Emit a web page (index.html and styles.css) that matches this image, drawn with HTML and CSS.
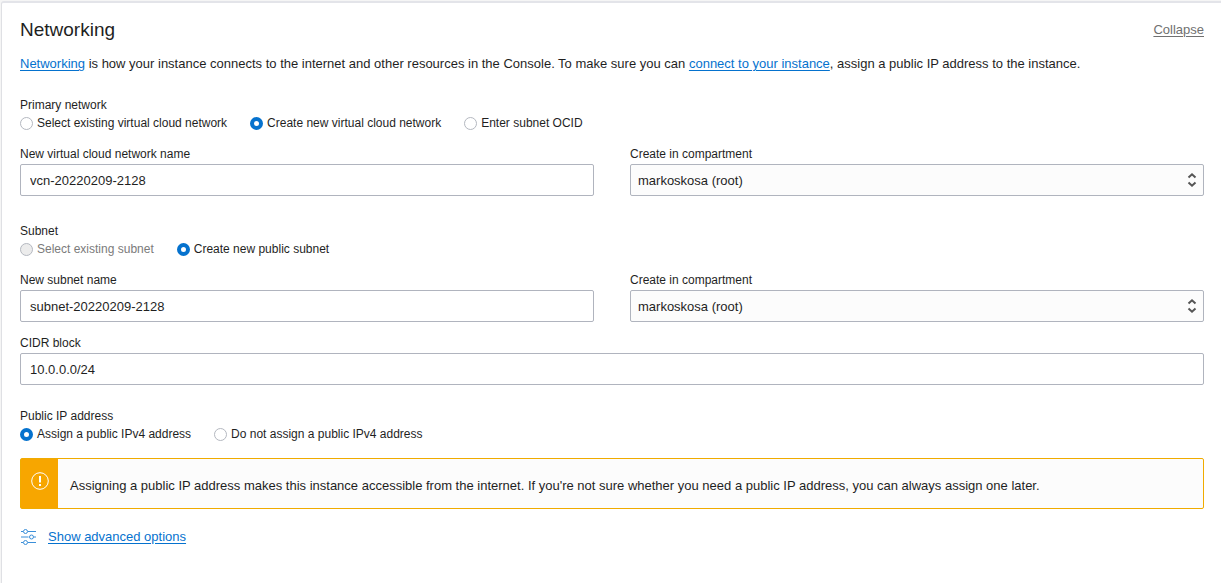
FILE: index.html
```html
<!DOCTYPE html>
<html lang="en">
<head>
<meta charset="utf-8">
<title>Networking</title>
<link rel="stylesheet" href="styles.css">
</head>
<body>
<main class="panel">
  <header class="panel-header">
    <h1 class="title">Networking</h1>
    <a class="collapse" href="#">Collapse</a>
  </header>
  <p class="intro"><a href="#">Networking</a> is how your instance connects to the internet and other resources in the Console. To make sure you can <a href="#">connect to your instance</a>, assign a public IP address to the instance.</p>
  <form>
    <fieldset class="group">
      <legend>Primary network</legend>
      <div class="radios">
        <label class="radio"><input type="radio" name="vcn">Select existing virtual cloud network</label>
        <label class="radio"><input type="radio" name="vcn" checked>Create new virtual cloud network</label>
        <label class="radio"><input type="radio" name="vcn">Enter subnet OCID</label>
      </div>
    </fieldset>
    <div class="fields">
      <div class="field">
        <label for="vcn-name">New virtual cloud network name</label>
        <input class="control" id="vcn-name" type="text" value="vcn-20220209-2128">
      </div>
      <div class="field">
        <label for="vcn-compartment">Create in compartment</label>
        <div class="select">
          <select class="control" id="vcn-compartment"><option>markoskosa (root)</option></select>
          <svg class="arrows" viewBox="0 0 10 16" aria-hidden="true"><path d="M1.500 5.500 5 2.300l3.500 3.200M1.500 10.500 5 13.700l3.500-3.200"/></svg>
        </div>
      </div>
    </div>
    <fieldset class="group">
      <legend>Subnet</legend>
      <div class="radios">
        <label class="radio disabled"><input type="radio" name="subnet" disabled>Select existing subnet</label>
        <label class="radio"><input type="radio" name="subnet" checked>Create new public subnet</label>
      </div>
    </fieldset>
    <div class="fields">
      <div class="field">
        <label for="subnet-name">New subnet name</label>
        <input class="control" id="subnet-name" type="text" value="subnet-20220209-2128">
      </div>
      <div class="field">
        <label for="subnet-compartment">Create in compartment</label>
        <div class="select">
          <select class="control" id="subnet-compartment"><option>markoskosa (root)</option></select>
          <svg class="arrows" viewBox="0 0 10 16" aria-hidden="true"><path d="M1.500 5.500 5 2.300l3.500 3.200M1.500 10.500 5 13.700l3.500-3.200"/></svg>
        </div>
      </div>
      <div class="field wide">
        <label for="cidr">CIDR block</label>
        <input class="control" id="cidr" type="text" value="10.0.0.0/24">
      </div>
    </div>
    <fieldset class="group">
      <legend>Public IP address</legend>
      <div class="radios">
        <label class="radio"><input type="radio" name="ip" checked>Assign a public IPv4 address</label>
        <label class="radio"><input type="radio" name="ip">Do not assign a public IPv4 address</label>
      </div>
    </fieldset>
  </form>
  <div class="alert" role="note">
    <div class="alert-mark">
      <svg class="alert-icon" viewBox="0 0 18 18" aria-hidden="true"><circle cx="9" cy="9" r="8.300"/><path d="M9 4v6.500M9 12v2"/></svg>
    </div>
    <p class="alert-text">Assigning a public IP address makes this instance accessible from the internet. If you're not sure whether you need a public IP address, you can always assign one later.</p>
  </div>
  <div class="advanced">
    <svg class="sliders" viewBox="0 0 16 16" aria-hidden="true"><path d="M1 2.500h2M8 2.500h8M1 8h7.500M14 8h2M1 13.500h2M8 13.500h8"/><circle cx="5.500" cy="2.500" r="2"/><circle cx="11.500" cy="8" r="2"/><circle cx="5.500" cy="13.500" r="2"/></svg>
    <a href="#">Show advanced options</a>
  </div>
</main>
</body>
</html>
```
FILE: styles.css
```css
* {
  box-sizing: border-box;
}

body {
  margin: 0;
  padding: 1px 0 0 1px;
  background: #f5f5f5;
  color: #1f1f1f;
  font-family: "Liberation Sans", Arial, sans-serif;
  font-size: 12px;
  line-height: 18px;
}

a {
  color: #0572ce;
  text-underline-offset: 2px;
}

.panel {
  min-height: calc(100vh - 1px);
  padding: 15px 17px 35px 18px;
  border-top: 2px solid #e3e4e9;
  border-left: 1px solid #dfe0e4;
  border-top-left-radius: 3px;
  background: #fff;
}

.panel-header {
  display: flex;
  align-items: center;
  justify-content: space-between;
}

.title {
  margin: 0;
  font-size: 19px;
  font-weight: 400;
  line-height: 24px;
}

.collapse {
  color: #707070;
  font-size: 13px;
}

.intro {
  margin: 12px 0 22px;
  font-size: 13px;
  line-height: 20px;
}

.group {
  min-width: 0;
  margin: 0;
  padding: 0;
  border: 0;
}

.group legend {
  padding: 0;
}

.radios {
  display: flex;
  flex-wrap: wrap;
  column-gap: 23px;
}

.radio {
  display: flex;
  align-items: center;
  gap: 4px;
}

.radio input {
  appearance: none;
  width: 13px;
  height: 13px;
  margin: 0;
  border: 1px solid #b4b8c0;
  border-radius: 50%;
  background: #fff;
}

.radio input:checked {
  border: 4px solid #0572ce;
}

.radio input:disabled {
  background: #ececec;
}

.disabled {
  color: #7b7b7b;
}

.fields {
  display: grid;
  grid-template-columns: 1fr 1fr;
  gap: 12px 36px;
  margin: 13px 0 26px;
}

.fields:has(.wide) {
  margin-bottom: 22px;
}

.field {
  display: flex;
  flex-direction: column;
  gap: 1px;
}

.wide {
  grid-column: 1 / -1;
}

.control {
  appearance: none;
  width: 100%;
  height: 32px;
  padding: 0 9px;
  border: 1px solid #b0b4be;
  border-radius: 2px;
  background: #fff;
  color: #1f1f1f;
  font-family: inherit;
  font-size: 13px;
}

.select {
  display: grid;
  align-items: center;
}

.select > * {
  grid-area: 1 / 1;
}

select.control {
  padding: 0 7px;
  background: #fcfcfc;
}

.arrows {
  justify-self: end;
  width: 10px;
  height: 16px;
  margin-right: 7px;
  fill: none;
  stroke: #555;
  stroke-width: 2;
  pointer-events: none;
}

.alert {
  display: flex;
  min-height: 51px;
  margin-top: 15px;
  border: 1px solid #f0ab00;
  border-radius: 2px;
  background: #fcfcfc;
}

.alert-mark {
  display: flex;
  justify-content: center;
  width: 37px;
  padding-top: 13px;
  background: #f7a600;
}

.alert-icon {
  width: 18px;
  height: 18px;
  fill: none;
  stroke: #fff;
}

.alert-icon path {
  stroke-width: 2;
}

.alert-text {
  align-self: center;
  margin: 4px 12px 0;
  font-size: 13px;
}

.advanced {
  display: flex;
  align-items: center;
  gap: 12px;
  margin-top: 18px;
  font-size: 13px;
  line-height: 20px;
}

.sliders {
  width: 16px;
  height: 16px;
  fill: none;
  stroke: #3b8fd9;
}
```
